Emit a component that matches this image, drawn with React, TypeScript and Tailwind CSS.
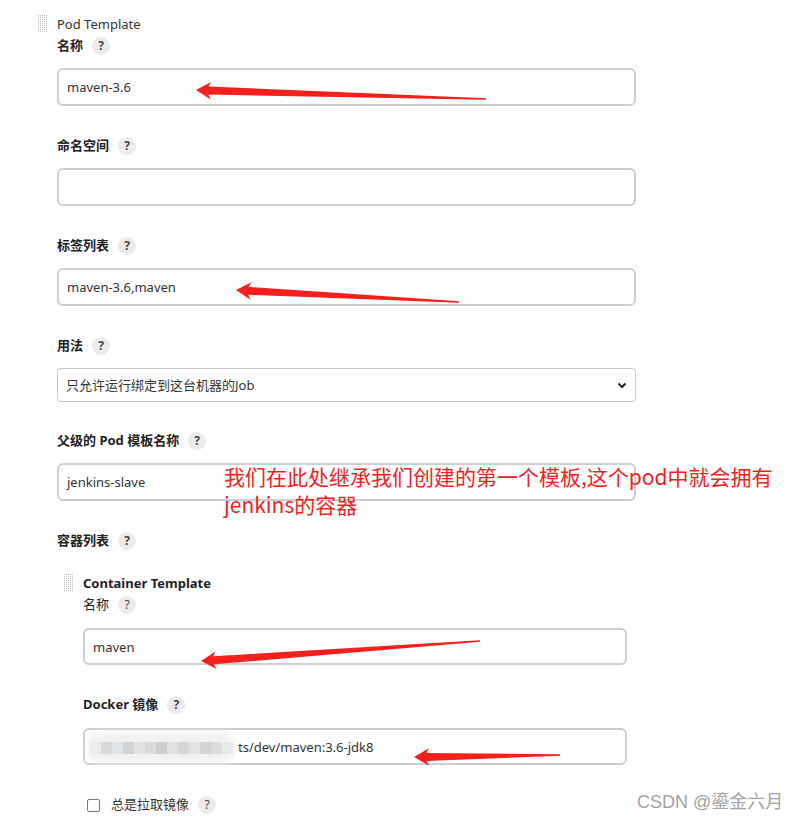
import React from "react";

const font = { fontFamily: '"Noto Sans", "Noto Sans CJK SC", sans-serif' };

function Handle() {
  const dots: React.ReactNode[] = [];
  for (let i = 0; i < 5; i++) {
    for (let j = 0; j < 9; j++) {
      dots.push(<rect key={`${i}-${j}`} x={i * 2} y={j * 2} width="1" height="1" fill="#bcbcbc" />);
    }
  }
  return (
    <svg width="11" height="19" viewBox="0 0 11 19" shapeRendering="crispEdges" className="mr-[8px] shrink-0">
      {dots}
    </svg>
  );
}

function Help() {
  return (
    <span className="ml-[9px] inline-flex h-[18px] w-[18px] items-center justify-center rounded-full bg-[#ebebeb] text-[12px] leading-none text-[#444]">
      ?
    </span>
  );
}

function Label({ children, bold = true, className = "" }: { children: React.ReactNode; bold?: boolean; className?: string }) {
  return (
    <div className={`flex h-[20px] items-center text-[13px] text-[#222] ${bold ? "font-bold" : ""} ${className}`}>
      <span>{children}</span>
      <Help />
    </div>
  );
}

function Field({ value, className = "" }: { value?: string; className?: string }) {
  return (
    <div className={`flex items-center rounded-[6px] border-2 border-[#c8d0d4] bg-white pl-[8px] pt-[2px] text-[13px] text-[#333] ${className}`}>
      {value}
    </div>
  );
}

function Arrow({ tip, tail }: { tip: [number, number]; tail: [number, number] }) {
  const [tx, ty] = tip;
  const [ex, ey] = tail;
  const len = Math.hypot(ex - tx, ey - ty);
  const ux = (ex - tx) / len;
  const uy = (ey - ty) / len;
  const nx = -uy;
  const ny = ux;
  const p = (a: number, b: number) => `${tx + ux * a + nx * b},${ty + uy * a + ny * b}`;
  const pts = [p(0, 0), p(15, -8.5), p(12.5, -3.8), p(len, -0.8), p(len, 0.8), p(12.5, 4.2), p(15, 9)].join(" ");
  return <polygon points={pts} fill="#f5201b" />;
}

const blocks = ["#ececec", "#d9d9d9", "#e1e4e6", "#d3d3d3", "#e2e2e2", "#dadada", "#ccd0d2", "#e0e0e0", "#d4d6d8", "#e3e3e3", "#d0d4d6", "#dcdcdc", "#e9e9e9"];

export default function App() {
  return (
    <div className="relative h-[818px] w-[799px] overflow-hidden bg-white text-[#333]" style={font}>
      <div className="flex pl-[38px] pt-[15px]">
        <Handle />
        <div className="w-[579px]">
          <div className="flex h-[20px] items-center text-[13px] text-[#333]">Pod Template</div>

          <Label className="mt-[1px]">名称</Label>
          <Field value="maven-3.6" className="mt-[12px] h-[38px]" />

          <Label className="mt-[30px]">命名空间</Label>
          <Field className="mt-[12px] h-[38px]" />

          <Label className="mt-[30px]">标签列表</Label>
          <Field value="maven-3.6,maven" className="mt-[12px] h-[38px]" />

          <Label className="mt-[30px]">用法</Label>
          <div className="mt-[12px] flex h-[34px] items-center justify-between rounded-[4px] border border-[#c3cbd0] bg-white pl-[8px] pr-[8px] pt-[1px] text-[13px] text-[#333]">
            <span>只允许运行绑定到这台机器的Job</span>
            <svg width="10" height="7" viewBox="0 0 10 7">
              <path d="M1.5 1.5 L5 5 L8.5 1.5" fill="none" stroke="#222" strokeWidth="2" />
            </svg>
          </div>

          <Label className="mt-[29px]">父级的 Pod 模板名称</Label>
          <Field value="jenkins-slave" className="mt-[12px] h-[38px]" />

          <Label className="mt-[30px]">容器列表</Label>

          <div className="ml-[7px] mt-[23px] flex">
            <Handle />
            <div className="w-[544px]">
              <div className="flex h-[20px] items-center text-[13px] font-bold text-[#222]">Container Template</div>

              <Label bold={false} className="mt-[1px]">名称</Label>
              <Field value="maven" className="mt-[13px] h-[37px]" />

              <Label className="mt-[30px]">Docker 镜像</Label>
              <div className="relative mt-[13px] flex h-[37px] items-center rounded-[6px] border-2 border-[#c8d0d4] bg-white pl-[153px] pt-[2px] text-[13px] text-[#333]">
                ts/dev/maven:3.6-jdk8
                <div className="absolute left-[2px] top-[2px] h-[31px] w-[148px] rounded-full bg-[#f1f1f1] blur-[3px]" />
                <div className="absolute left-[5px] top-[12px] flex h-[12px]">
                  {blocks.map((c, i) => (
                    <div key={i} className="h-[12px] w-[11px]" style={{ backgroundColor: c }} />
                  ))}
                </div>
              </div>

              <div className="mt-[30px] flex h-[20px] items-center text-[13px] text-[#333]">
                <span className="ml-[4px] mr-[11px] h-[13px] w-[13px] rounded-[2px] border border-[#767676] bg-white" />
                <span>总是拉取镜像</span>
                <Help />
              </div>
            </div>
          </div>
        </div>
      </div>

      <div
        className="absolute left-[224px] top-[462px] text-[21px] leading-[28px] text-[#f41e1e]"
        style={{ fontFamily: '"Noto Sans CJK SC", sans-serif' }}
      >
        我们在此处继承我们创建的第一个模板,这个pod中就会拥有
        <br />
        jenkins的容器
      </div>

      <svg className="pointer-events-none absolute left-0 top-0" width="799" height="818">
        <Arrow tip={[196, 90]} tail={[486, 99]} />
        <Arrow tip={[236, 290]} tail={[459, 302]} />
        <Arrow tip={[201, 661]} tail={[480, 641]} />
        <Arrow tip={[414, 757]} tail={[560, 755]} />
      </svg>

      <div
        className="absolute left-[637px] top-[792px] text-[18px] leading-[20px] text-[#a3a3a3]"
        style={{ fontFamily: '"Liberation Sans", "Noto Sans CJK SC", sans-serif' }}
      >
        CSDN @鎏金六月
      </div>
    </div>
  );
}
